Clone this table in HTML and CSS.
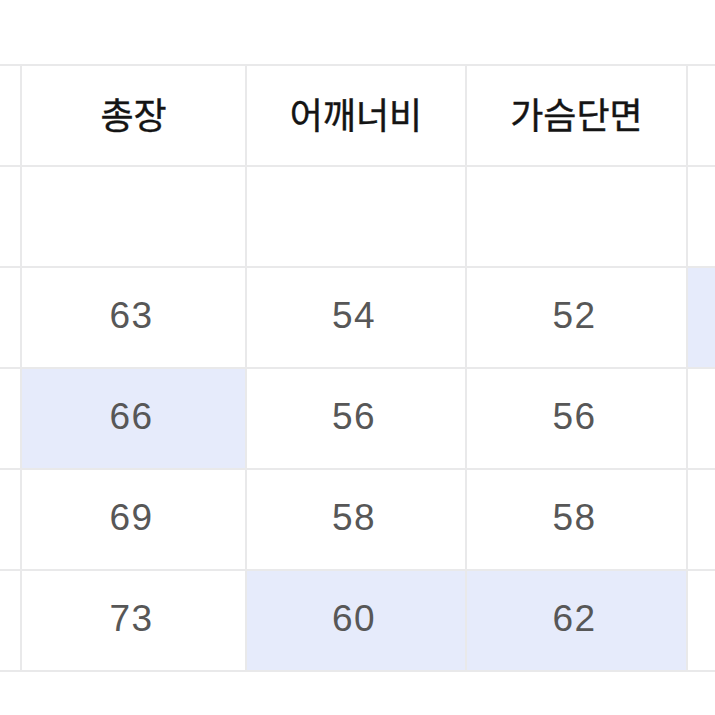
FILE: index.html
```html
<!DOCTYPE html>
<html lang="ko">
<head>
<meta charset="utf-8">
<link rel="stylesheet" href="styles.css">
</head>
<body>
<div class="page">
  <div class="table">
    <div class="cell"></div>
    <div class="cell head">총장</div>
    <div class="cell head">어깨너비</div>
    <div class="cell head">가슴단면</div>
    <div class="cell"></div>

    <div class="cell"></div>
    <div class="cell"></div>
    <div class="cell"></div>
    <div class="cell"></div>
    <div class="cell"></div>

    <div class="cell"></div>
    <div class="cell num">63</div>
    <div class="cell num">54</div>
    <div class="cell num">52</div>
    <div class="cell hl"></div>

    <div class="cell"></div>
    <div class="cell num hl">66</div>
    <div class="cell num">56</div>
    <div class="cell num">56</div>
    <div class="cell"></div>

    <div class="cell"></div>
    <div class="cell num">69</div>
    <div class="cell num">58</div>
    <div class="cell num">58</div>
    <div class="cell"></div>

    <div class="cell"></div>
    <div class="cell num">73</div>
    <div class="cell num hl">60</div>
    <div class="cell num hl">62</div>
    <div class="cell"></div>
  </div>
</div>
</body>
</html>
```

FILE: styles.css
```css
html, body {
  margin: 0;
  padding: 0;
  background: #ffffff;
}

.page {
  width: 715px;
  height: 715px;
  overflow: hidden;
  padding-top: 64px;
  box-sizing: border-box;
}

.table {
  display: grid;
  grid-template-columns: 20px 223px 218px 219px 40px;
  grid-auto-rows: 99px;
  gap: 2px;
  padding: 2px 0;
  background: #e9e9ea;
  width: max-content;
}

.cell {
  background: #ffffff;
  display: flex;
  align-items: center;
  justify-content: center;
  box-sizing: border-box;
}

.hl {
  background: #e6ebfb;
}

.head {
  font-family: "Noto Sans CJK KR", "Noto Sans", sans-serif;
  font-weight: 400;
  font-size: 36px;
  color: #141414;
  padding-bottom: 5px;
  -webkit-text-stroke: 0.4px #141414;
}

.num {
  font-family: "Liberation Sans", Arial, sans-serif;
  font-size: 37px;
  letter-spacing: 1.5px;
  color: #575757;
  padding-bottom: 4px;
  padding-right: 4px;
}
```
